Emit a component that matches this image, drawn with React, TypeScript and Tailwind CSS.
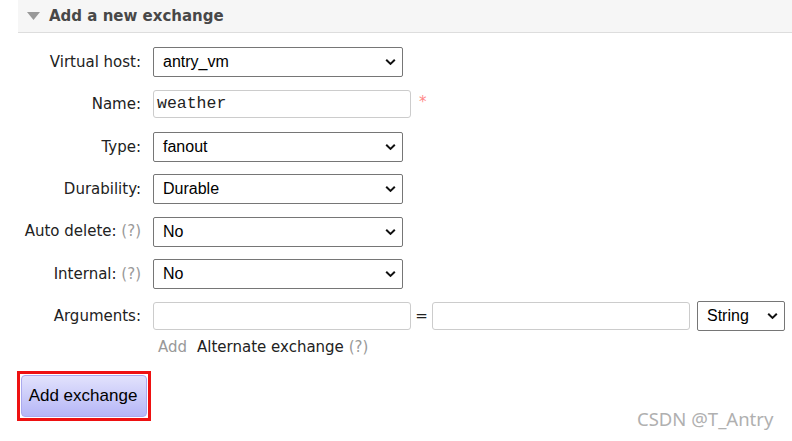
import React from 'react';

const labelFont = { fontFamily: '"DejaVu Sans", Verdana, sans-serif' };

function Chevron() {
  return (
    <svg
      className="pointer-events-none absolute right-[7px] top-1/2 -translate-y-1/2"
      width="11"
      height="7"
      viewBox="0 0 11 7"
      fill="none"
    >
      <path d="M1.2 1.2 L5.5 5.4 L9.8 1.2" stroke="#111" strokeWidth="2" strokeLinejoin="miter" />
    </svg>
  );
}

function Select({ value, width }: { value: string; width: string }) {
  return (
    <div className={`relative h-[30px] ${width}`}>
      <div className="flex h-full w-full items-center rounded-[2px] border border-[#767676] bg-white pl-[9px] text-[16px] text-black font-['Liberation_Sans',Arial,sans-serif]">
        {value}
      </div>
      <Chevron />
    </div>
  );
}

function TextBox({ value, width = 'w-[258px]' }: { value?: string; width?: string }) {
  return (
    <div
      className={`flex h-[28px] ${width} items-center rounded-[3px] border border-[#cccccc] bg-white pl-[3px] text-[16.5px] text-[#222] font-['Liberation_Mono','Courier_New',monospace]`}
    >
      {value}
    </div>
  );
}

function Row({ label, help, children }: { label: string; help?: boolean; children: React.ReactNode }) {
  return (
    <div className="flex h-[30px] items-center">
      <div className="w-[142px] pr-[1px] text-right text-[15px] text-[#222]" style={labelFont}>
        {label}
        {help && <span className="text-[#999]"> (?)</span>}
      </div>
      <div className="ml-[11px] flex items-center">{children}</div>
    </div>
  );
}

export default function App() {
  return (
    <div className="relative h-[441px] w-[792px] overflow-hidden bg-white">
      <div className="ml-[18px] flex h-[33px] items-center border-b border-[#dddddd] bg-[#f6f6f6]">
        <svg className="ml-[9px]" width="13" height="8" viewBox="0 0 13 8">
          <polygon points="0,0 13,0 6.5,8" fill="#999" />
        </svg>
        <span className="ml-[9px] text-[15px] font-bold text-[#484848]" style={labelFont}>
          Add a new exchange
        </span>
      </div>

      <div className="mt-[14px] flex flex-col gap-[12.4px]">
        <Row label="Virtual host:">
          <Select value="antry_vm" width="w-[250px]" />
        </Row>
        <Row label="Name:">
          <TextBox value="weather" />
          <span className="ml-[8px] mt-[-4px] text-[15px] text-[#f88]" style={labelFont}>*</span>
        </Row>
        <Row label="Type:">
          <Select value="fanout" width="w-[250px]" />
        </Row>
        <Row label="Durability:">
          <Select value="Durable" width="w-[250px]" />
        </Row>
        <Row label="Auto delete:" help>
          <Select value="No" width="w-[250px]" />
        </Row>
        <Row label="Internal:" help>
          <Select value="No" width="w-[250px]" />
        </Row>
        <Row label="Arguments:">
          <TextBox />
          <span className="mx-[4px] w-[13px] text-center text-[15px] text-[#222]" style={labelFont}>=</span>
          <TextBox />
          <div className="ml-[7px]">
            <Select value="String" width="w-[88px]" />
          </div>
        </Row>
      </div>

      <div className="ml-[158px] mt-[5px] text-[15px] text-[#222]" style={labelFont}>
        <span className="text-[#999]">Add</span>
        <span className="ml-[10px]">Alternate exchange</span>
        <span className="text-[#999]"> (?)</span>
      </div>

      <div className="ml-[17px] mt-[12px] inline-block border-[3px] border-[#ee1111] p-[1px]">
        <button className="h-[42px] w-[126px] rounded-[4px] border border-[#aaaaee] bg-gradient-to-b from-[#e2e2fc] to-[#b6b6f6] pr-[2px] text-[17px] text-black font-['Liberation_Sans',Arial,sans-serif]">
          Add exchange
        </button>
      </div>

      <div className="absolute left-[637px] top-[405px] text-[18.5px] text-[#b0b0b0] font-['Noto_Sans',sans-serif]">
        CSDN @T_Antry
      </div>
    </div>
  );
}
